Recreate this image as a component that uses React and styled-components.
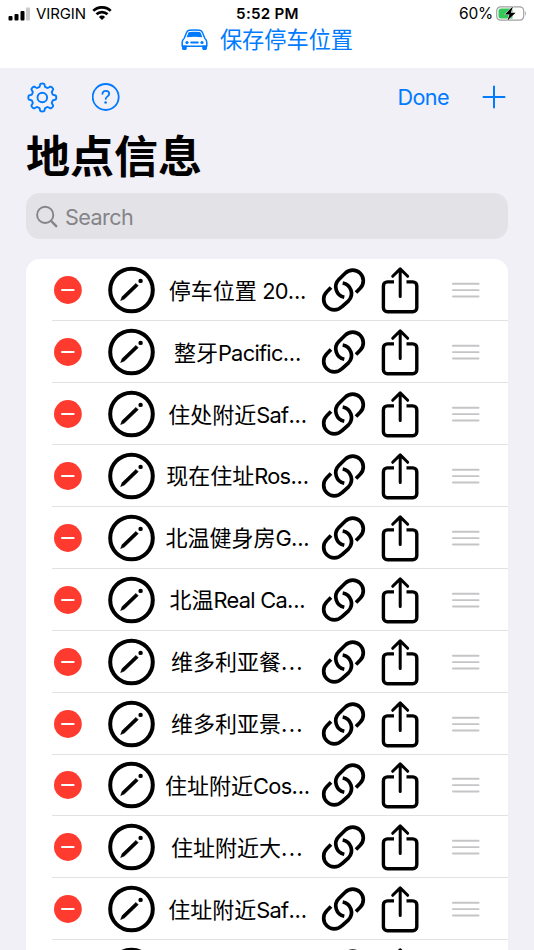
import React from 'react';
import styled, { createGlobalStyle } from 'styled-components';

const BLUE = '#007aff';

const GlobalStyle = createGlobalStyle`
  * {
    box-sizing: border-box;
  }
  body {
    margin: 0;
    overflow: hidden;
    font-family: Inter, "Noto Sans CJK SC", sans-serif;
    color: #000;
  }
  svg {
    display: block;
    flex: none;
  }
`;

const Screen = styled.div`
  width: 534px;
  height: 950px;
  overflow: hidden;
  background: #f1f0f6;
`;

const TopPanel = styled.div`
  height: 68px;
  background: #fff;
`;

const StatusBar = styled.div`
  height: 27px;
  display: grid;
  grid-template-columns: 1fr auto 1fr;
  align-items: center;
  padding: 0 7px 0 8px;
  font-size: 15px;
  line-height: 27px;
`;

const StatusGroup = styled.div`
  display: flex;
  align-items: center;
  gap: ${({ gap }) => gap}px;
  justify-content: ${({ end }) => (end ? 'flex-end' : 'flex-start')};
`;

const Carrier = styled.span`
  font-size: 15px;
  letter-spacing: -0.1px;
`;

const Clock = styled.span`
  font-size: 15.2px;
  font-weight: 600;
  letter-spacing: 0.25px;
`;

const Percent = styled.span`
  font-size: 15.5px;
  letter-spacing: -0.2px;
`;

const ParkingLink = styled.div`
  display: flex;
  justify-content: center;
  align-items: center;
  gap: 12px;
  height: 26px;
  color: ${BLUE};
  font-size: 22.2px;
  line-height: 26px;
`;

const Toolbar = styled.div`
  height: 58px;
  display: flex;
  align-items: center;
  padding: 0 28px 0 26px;
  color: ${BLUE};
`;

const HelpSlot = styled.div`
  margin-left: 33px;
`;

const Done = styled.div`
  margin-left: auto;
  margin-right: 33px;
  font-size: 21.6px;
  letter-spacing: -0.6px;
`;

const Title = styled.h1`
  margin: 0;
  height: 67.3px;
  padding: 1px 0 0 26px;
  font-size: 44px;
  line-height: 60px;
  font-weight: 700;
`;

const SearchBox = styled.div`
  height: 46px;
  margin: 0 26px 20px;
  padding: 1px 0 0 9px;
  display: flex;
  align-items: center;
  gap: 6px;
  border-radius: 14px;
  background: #e3e2e7;
  color: #858489;
  font-size: 21.6px;
  letter-spacing: -0.6px;
`;

const Card = styled.div`
  margin: 0 26px;
  padding-left: 26px;
  background: #fff;
  border-radius: 14px 14px 0 0;
`;

const Row = styled.div`
  height: 61.92px;
  display: grid;
  grid-template-columns: 31px 73px 164px 47px 66px 65px;
  align-items: center;
  padding-top: 0.9px;
  border-bottom: 1px solid #e2e2e4;
`;

const Cell = styled.div`
  display: flex;
  justify-content: ${({ align }) => align || 'center'};
`;

const Label = styled.div`
  display: flex;
  justify-content: center;
  padding: 1px 1px 0 0;
  font-size: 22px;
  line-height: 30px;
  white-space: pre;
`;

const Latin = styled.span`
  font-size: 21.8px;
  letter-spacing: -0.7px;
`;

const Dots = styled.span`
  letter-spacing: ${({ wide }) => (wide ? 1.4 : -0.2)}px;
`;

const places = [
  { name: '停车位置', latin: ' 20' },
  { name: '整牙', latin: 'Pacific' },
  { name: '住处附近', latin: 'Saf' },
  { name: '现在住址', latin: 'Ros' },
  { name: '北温健身房', latin: 'G' },
  { name: '北温', latin: 'Real Ca' },
  { name: '维多利亚餐' },
  { name: '维多利亚景' },
  { name: '住址附近', latin: 'Cos' },
  { name: '住址附近大' },
  { name: '住址附近', latin: 'Saf' },
  { name: '' },
];

const SignalIcon = () => (
  <svg width="22" height="14" viewBox="0 0 22 14">
    <rect x="0.500" y="9" width="4" height="4.500" rx="1" />
    <rect x="6.500" y="7" width="4" height="6.500" rx="1" />
    <rect x="12.500" y="4" width="4" height="9.500" rx="1" />
    <rect x="18" y="0.500" width="4" height="13" rx="1" fill="#cacaca" />
  </svg>
);

const WifiIcon = () => (
  <svg width="20" height="15" viewBox="0 0 20 15" fill="none" stroke="#000" strokeWidth="2.7">
    <path d="M1.3 4.900a12.400 12.400 0 0 1 17.400 0" />
    <path d="M4.500 8.300a7.800 7.800 0 0 1 11 0" />
    <path d="M10 14 6.900 10.900a4.400 4.400 0 0 1 6.200 0Z" fill="#000" stroke="none" />
  </svg>
);

const BatteryIcon = () => (
  <svg width="31" height="16" viewBox="0 0 31 16">
    <rect x="0.700" y="0.800" width="27" height="13.400" rx="4" fill="#fff" stroke="#a0a0a0" strokeWidth="1.200" />
    <path d="M29.100 5.100q1.900 2.400 0 4.800Z" fill="#a0a0a0" />
    <path d="M5 2.600h11.500v9.800H5a2.500 2.500 0 0 1-2.500-2.500V5.100A2.500 2.500 0 0 1 5 2.600Z" fill="#34c759" />
    <path d="M17 0.300 8.800 8.400h4.700l-2.200 6.400 8.300-8.100h-4.800Z" stroke="#fff" strokeWidth="1" paintOrder="stroke" />
  </svg>
);

const CarIcon = () => (
  <svg width="27" height="22" viewBox="0 0 27 22">
    <path
      d="M3.200 9.300 5.700 3.200Q6.400 1.500 8.200 1.300q5.300-.5 10.600 0 1.800.2 2.500 1.900l2.500 6.100q2 1.700 2 4.200v3.800H1.200v-3.800q0-2.500 2-4.200Z"
      fill="none"
      stroke={BLUE}
      strokeWidth="1.500"
      strokeLinejoin="round"
    />
    <path d="M5.600 8.200 7.400 3.800Q7.700 3 8.600 2.900q4.900-.4 9.800 0 .9.100 1.200.9l1.800 4.400q-7.900-.8-15.800 0Z" fill={BLUE} />
    <path d="M1 16.500h4.800v3.100q0 1.400-1.400 1.400h-2Q1 21 1 19.600ZM21.200 16.500H26v3.100q0 1.400-1.400 1.400h-2q-1.400 0-1.400-1.400Z" fill={BLUE} />
    <circle cx="6" cy="13.500" r="1.600" fill={BLUE} />
    <circle cx="21" cy="13.500" r="1.600" fill={BLUE} />
    <rect x="9.200" y="12.500" width="8.600" height="2" rx="1" fill={BLUE} />
  </svg>
);

// the rim swings between the valley and the tooth radius eight times per turn
const gearPath = () => {
  const points = [];
  for (let deg = 0; deg < 360; deg += 3) {
    const a = (deg * Math.PI) / 180;
    const r = 12.35 + 1.6 * Math.tanh(2.6 * Math.cos(8 * a));
    points.push(`${(16.3 + r * Math.sin(a)).toFixed(2)} ${(16.5 - r * Math.cos(a)).toFixed(2)}`);
  }
  return `M${points.join('L')}Z`;
};

const GearIcon = () => (
  <svg width="33" height="33" viewBox="0 0 33 33" fill="none" stroke={BLUE} strokeLinejoin="round">
    <path d={gearPath()} strokeWidth="1.900" />
    <circle cx="16.300" cy="16.500" r="4.800" strokeWidth="1.900" />
  </svg>
);

const HelpIcon = () => (
  <svg width="28" height="28" viewBox="0 0 28 28" fill="none" stroke={BLUE} strokeLinecap="round">
    <circle cx="13.700" cy="14" r="13" strokeWidth="1.800" />
    <path d="M10.400 10.800c.2-2 1.500-3 3.400-3 2 0 3.400 1.200 3.400 3 0 2.900-3.500 2.700-3.500 5.100" strokeWidth="1.800" />
    <circle cx="13.600" cy="19.500" r="1.300" fill={BLUE} stroke="none" />
  </svg>
);

const PlusIcon = () => (
  <svg width="24" height="24" viewBox="0 0 24 24" stroke={BLUE} strokeWidth="2" strokeLinecap="round">
    <path d="M12 1.500v21M1.500 12h21" />
  </svg>
);

const SearchIcon = () => (
  <svg width="24" height="24" viewBox="0 0 24 24" fill="none" stroke="#858489" strokeLinecap="round">
    <circle cx="10.200" cy="9.900" r="8.100" strokeWidth="1.900" />
    <path d="m16.200 16 5 5.200" strokeWidth="2.500" />
  </svg>
);

const RemoveIcon = () => (
  <svg width="28" height="28" viewBox="0 0 28 28">
    <circle cx="13.900" cy="14" r="13.900" fill="#ff3b30" />
    <rect x="7" y="13" width="13.600" height="2" rx="1" fill="#fff" />
  </svg>
);

const EditIcon = () => (
  <svg width="49" height="48" viewBox="0 0 49 48">
    <circle cx="24.500" cy="24" r="21.300" fill="none" stroke="#000" strokeWidth="4" />
    <path d="m13.700 34.500 1.500-3.900L28.900 17.400l2.300 2.300L17.400 32.900Z" strokeLinejoin="round" stroke="#000" strokeWidth=".6" />
    <circle cx="33.600" cy="14.900" r="2.200" />
  </svg>
);

const LinkIcon = () => (
  <svg width="47" height="48" viewBox="0 0 47 48" fill="none" stroke="#000" strokeWidth="3.700">
    <path d="M24.300 31.300A10.600 10.600 0 0 1 18.800 13.500L25.200 7.200A10.600 10.600 0 0 1 40.200 22.200L36 26.500" />
    <path d="M22.700 17A10.600 10.600 0 0 1 28.500 34.800L21.800 40.800A10.600 10.600 0 0 1 6.800 25.800L11 21.500" />
  </svg>
);

const ShareIcon = () => (
  <svg width="44" height="48" viewBox="0 0 44 48" fill="none" stroke="#000" strokeWidth="3.400">
    <path d="M16 15.900H9.400a4 4 0 0 0-4 4v21.900a4 4 0 0 0 4 4h25.400a4 4 0 0 0 4-4V19.900a4 4 0 0 0-4-4H28.500" />
    <path d="M22.200 3.200v27.300M14.700 10.300 22.200 2.900l7.500 7.400" strokeLinecap="round" strokeLinejoin="round" strokeWidth="3" />
  </svg>
);

const HandleIcon = () => (
  <svg width="28" height="16" viewBox="0 0 28 16" fill="#c5c5c7">
    <rect x="0" y="0.800" width="27.500" height="1.900" rx=".8" />
    <rect x="0" y="7.200" width="27.500" height="1.900" rx=".8" />
    <rect x="0" y="13.500" width="27.500" height="1.900" rx=".8" />
  </svg>
);

const PlaceRow = ({ name, latin }) => (
  <Row>
    <Cell><RemoveIcon /></Cell>
    <Cell align="flex-end"><EditIcon /></Cell>
    <Label>
      {name}
      {latin && <Latin>{latin}</Latin>}
      {name && <Dots wide={!latin}>...</Dots>}
    </Label>
    <Cell><LinkIcon /></Cell>
    <Cell><ShareIcon /></Cell>
    <Cell><HandleIcon /></Cell>
  </Row>
);

const App = () => (
  <Screen>
    <GlobalStyle />
    <TopPanel>
      <StatusBar>
        <StatusGroup gap={6}>
          <SignalIcon />
          <Carrier>VIRGIN</Carrier>
          <WifiIcon />
        </StatusGroup>
        <Clock>5:52 PM</Clock>
        <StatusGroup gap={3} end>
          <Percent>60%</Percent>
          <BatteryIcon />
        </StatusGroup>
      </StatusBar>
      <ParkingLink>
        <CarIcon />
        <span>保存停车位置</span>
      </ParkingLink>
    </TopPanel>
    <Toolbar>
      <GearIcon />
      <HelpSlot><HelpIcon /></HelpSlot>
      <Done>Done</Done>
      <PlusIcon />
    </Toolbar>
    <Title>地点信息</Title>
    <SearchBox>
      <SearchIcon />
      <span>Search</span>
    </SearchBox>
    <Card>
      {places.map((place, i) => <PlaceRow key={i} {...place} />)}
    </Card>
  </Screen>
);

export default App;
